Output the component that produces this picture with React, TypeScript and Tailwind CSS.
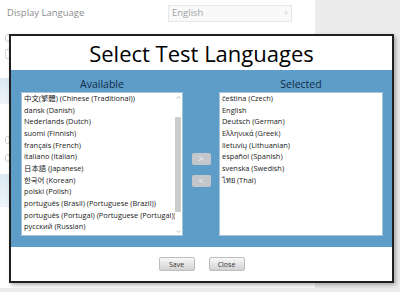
import React from 'react';

const available = [
  '中文(繁體) (Chinese (Traditional))',
  'dansk (Danish)',
  'Nederlands (Dutch)',
  'suomi (Finnish)',
  'français (French)',
  'italiano (Italian)',
  '日本語 (Japanese)',
  '한국어 (Korean)',
  'polski (Polish)',
  'português (Brasil) (Portuguese (Brazil))',
  'português (Portugal) (Portuguese (Portugal))',
  'русский (Russian)',
];

const selected = [
  'čeština (Czech)',
  'English',
  'Deutsch (German)',
  'Ελληνικά (Greek)',
  'lietuvių (Lithuanian)',
  'español (Spanish)',
  'svenska (Swedish)',
  'ไทย (Thai)',
];

function Chevron({ up }: { readonly up?: boolean }): JSX.Element {
  return (
    <div className="flex h-[8px] items-center justify-center">
      <svg width="5" height="3" viewBox="0 0 5 3">
        <path
          d={up ? 'M0.5 2.5 L2.5 0.5 L4.5 2.5' : 'M0.5 0.5 L2.5 2.5 L4.5 0.5'}
          fill="none"
          stroke="#a8a8a8"
          strokeWidth="0.8"
        />
      </svg>
    </div>
  );
}

function LanguageList({
  items,
  scroll,
}: {
  readonly items: ReadonlyArray<string>;
  readonly scroll?: boolean;
}): JSX.Element {
  return (
    <div className="flex h-[144px] border border-[#a9c3d8] bg-white">
      <ul className="flex-1 overflow-hidden pl-[2px]">
        {items.map((item) => (
          <li
            className="whitespace-nowrap text-[7.4px] leading-[11.67px] text-[#222]"
            key={item}
          >
            {item}
          </li>
        ))}
      </ul>
      {scroll && (
        <div className="mr-[1px] flex w-[6px] flex-col">
          <Chevron up />
          <div className="flex flex-1 flex-col pb-[15px] pt-[16px]">
            <div className="flex-1 bg-[#cdcdcd]" />
          </div>
          <Chevron />
        </div>
      )}
    </div>
  );
}

function MoveButton({ label }: { readonly label: string }): JSX.Element {
  return (
    <button
      type="button"
      className="flex h-[12px] w-[19px] items-center justify-center rounded-[2px] bg-[#c3c7cb] text-[9px] leading-none text-[#f4f4f4]"
    >
      {label}
    </button>
  );
}

function FooterButton({ label }: { readonly label: string }): JSX.Element {
  return (
    <button
      type="button"
      className="flex h-[14px] w-[36px] items-center justify-center rounded-[2px] border border-[#bdbdbd] bg-gradient-to-b from-[#f8f8f8] to-[#d2d2d2] text-[7px] leading-none text-[#333]"
    >
      {label}
    </button>
  );
}

export default function App(): JSX.Element {
  return (
    <div className="relative h-[292px] w-[400px] overflow-hidden bg-[#ececec] font-['Open_Sans','Noto_Sans_CJK_TC','Noto_Sans',sans-serif]">
      <div className="flex h-[288px] w-[315px] flex-col bg-white">
        <div className="flex items-center pl-[7px] pt-[5px]">
          <span className="w-[161px] text-[9.5px] text-[#8c8c8c]">
            Display Language
          </span>
          <div className="flex h-[17px] w-[124px] items-center justify-between border border-[#e8e8e8] bg-[#f9f9f9] px-[3px] text-[9.5px] text-[#a3a3a3]">
            English
            <span className="text-[4px] text-[#dddddd]">▼</span>
          </div>
        </div>
        <div className="ml-[5px] mt-[12px] h-[8px] w-[5px] rounded-full border border-[#cfcfcf]" />
        <div className="ml-[5px] mt-[7px] h-[10px] w-[6px] rounded-[2px] border border-[#d8d8d8]" />
        <div className="mt-[19px] h-[26px] bg-gradient-to-b from-[#dce9f4] to-[#eef4f9]" />
        <div className="ml-[5px] mt-[32px] h-[8px] w-[5px] rounded-full border border-[#cfcfcf]" />
        <div className="ml-[5px] mt-[10px] h-[8px] w-[5px] rounded-full border border-[#cfcfcf]" />
        <div className="mt-[12px] h-[33px] bg-gradient-to-b from-[#dce9f4] to-[#eef4f9]" />
      </div>

      <div className="absolute left-[9px] top-[34px] flex h-[249px] w-[385px] flex-col border-2 border-[#202020] bg-white shadow-[2px_2px_4px_rgba(0,0,0,0.3)]">
        <div className="flex h-[34px] items-center justify-center text-[22px] leading-none text-black">
          Select Test Languages
        </div>
        <div className="flex h-[177px] bg-[#5f9dc9] pl-[10px] pr-[9px] pt-[6px]">
          <div className="flex w-[162px] flex-col">
            <h2 className="h-[16px] text-center text-[10.5px] leading-[16px] text-[#0f2b48]">
              Available
            </h2>
            <LanguageList items={available} scroll />
          </div>
          <div className="flex w-[36px] flex-col items-center justify-center gap-[10px] pt-[16px]">
            <MoveButton label=">" />
            <MoveButton label="<" />
          </div>
          <div className="flex w-[164px] flex-col">
            <h2 className="h-[16px] text-center text-[10.5px] leading-[16px] text-[#0f2b48]">
              Selected
            </h2>
            <LanguageList items={selected} />
          </div>
        </div>
        <div className="flex flex-1 items-center justify-center gap-[14px]">
          <FooterButton label="Save" />
          <FooterButton label="Close" />
        </div>
      </div>
    </div>
  );
}
